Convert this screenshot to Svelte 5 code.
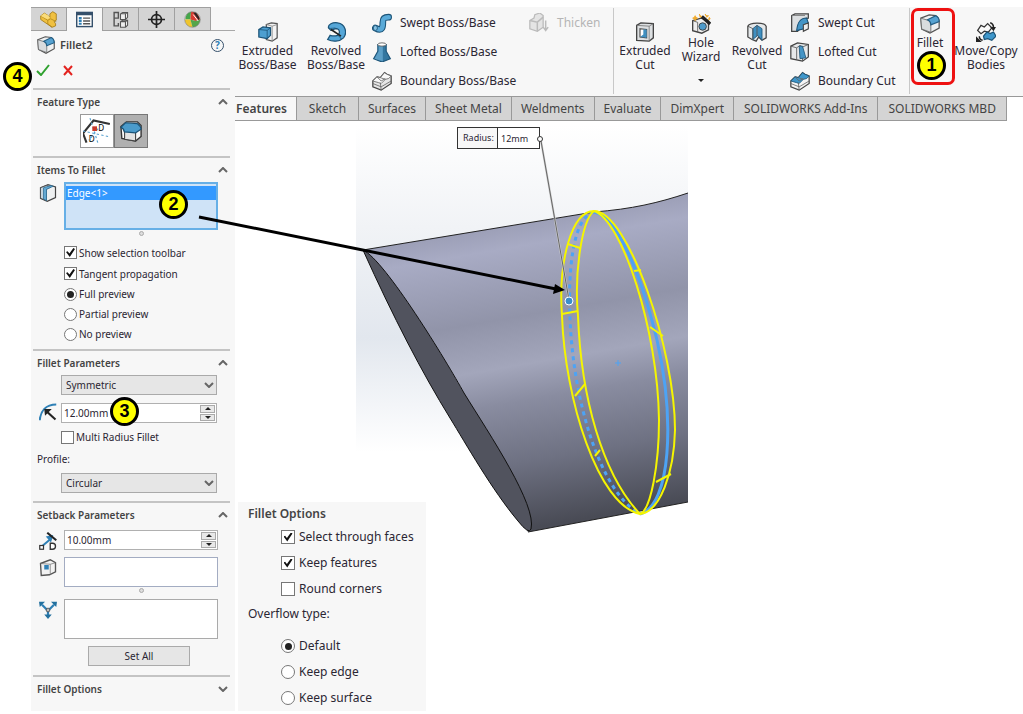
<script lang="ts">
    type Choice = { label: string; on: boolean };

    const managerTabs = ["part", "list", "config", "target", "ball"];
    const managerNames = ["Design tree", "Properties", "Configurations", "DimXpert manager", "Display"];

    const commandTabs = [
        "Features",
        "Sketch",
        "Surfaces",
        "Sheet Metal",
        "Weldments",
        "Evaluate",
        "DimXpert",
        "SOLIDWORKS Add-Ins",
        "SOLIDWORKS MBD",
    ];

    const bossTools = [
        { icon: "sweep", label: "Swept Boss/Base" },
        { icon: "loft", label: "Lofted Boss/Base" },
        { icon: "boundary", label: "Boundary Boss/Base" },
    ];

    const cutTools = [
        { icon: "sweepcut", label: "Swept Cut" },
        { icon: "loftcut", label: "Lofted Cut" },
        { icon: "boundarycut", label: "Boundary Cut" },
    ];

    const itemChecks: Choice[] = $state([
        { label: "Show selection toolbar", on: true },
        { label: "Tangent propagation", on: true },
    ]);
    const optionChecks: Choice[] = $state([
        { label: "Select through faces", on: true },
        { label: "Keep features", on: true },
        { label: "Round corners", on: false },
    ]);
    const previews = ["Full preview", "Partial preview", "No preview"];
    const overflows = ["Default", "Keep edge", "Keep surface"];

    let manager = $state("list");
    let command = $state("Features");
    let preview = $state("Full preview");
    let overflow = $state("Default");
    let multiRadius = $state(false);
    let radius = $state(12);
    let setback = $state(10);
</script>

{#snippet icon(name: string)}
    <svg class="icon" viewBox="0 0 24 24" aria-hidden="true">
        {#if name === "part"}
            <path d="M1 7l5-4 5 3 3 3V4l4-3 5 3v9l-3 2 2 3v3l-5 2L1 12z" fill="#f0c040" stroke="#a57c17" stroke-width="1.2" />
            <path d="M1 7l10 6v5l6 5M11 13l4-2 8 4" fill="none" stroke="#a57c17" />
            <path d="M1 7l5-4 5 3 3 3-3 3z" fill="#f9dc7c" />
        {:else if name === "list"}
            <rect x="1" y="2" width="22" height="20" fill="#fff" stroke="#35506b" stroke-width="2" />
            <path d="M1 4h22" stroke="#35506b" stroke-width="4" />
            <path d="M4 10h4M4 14h4M4 18h4" stroke="#2f7fb5" stroke-width="3" />
            <path d="M10 10h10M10 14h10M10 18h10" stroke="#555" stroke-width="2" />
        {:else if name === "config"}
            <path d="M3 1v20h7M3 2h6v8H3M9 17v4" fill="none" stroke="#555" stroke-width="2" />
            <path d="M12 4l3-2h7v7l-3 3h-7zM12 4h7v8M19 4l3-2M12 15l3-2h7v7l-3 3h-7zM12 15h7v8M19 15l3-2" fill="#eee" stroke="#555" stroke-width="1.5" />
        {:else if name === "target"}
            <circle cx="12" cy="12" r="7" fill="none" stroke="#222" stroke-width="2.4" />
            <path d="M12 0v24M0 12h24" stroke="#222" stroke-width="2.4" />
        {:else if name === "ball"}
            <circle cx="12" cy="12" r="11" fill="#eee" />
            <path d="M2 12A11 11 0 0 1 10 1L9 12z" fill="#45a64a" />
            <path d="M9 12L10 1Q20 0 23 12l-7 2z" fill="#d93b32" />
            <path d="M1 12l8 0 3 11A11 11 0 0 1 1 12z" fill="#efc52d" />
            <path d="M9 12l7 2 7-2a11 11 0 0 1-11 11z" fill="#55a64a" />
            <path d="M13 2l4 0 5 8-1 3z" fill="#262626" />
            <path d="M13 5l7 9" stroke="#fff" stroke-width="1.4" />
            <circle cx="12" cy="12" r="11" fill="none" stroke="#777" stroke-width="0.8" />
        {:else if name === "fillet"}
            <path d="M1 5L11 1l8 1q4 3 4 6v9l-11 6L2 18z" fill="#eef0f1" stroke="#555" stroke-width="1.5" />
            <path d="M1 5l10 3q2 2 2 5v9L2 18z" fill="#d9dcde" stroke="#666" />
            <path d="M9 7L19 2q4 2 4 7l-10 4q0-4-4-6z" fill="#56a2d1" stroke="#235e84" stroke-width="1.4" />
        {:else if name === "filletface"}
            <path d="M1 7l6-5h12l4 4v12l-6 5L2 20z" fill="#fafafa" stroke="#333" stroke-width="1.5" />
            <path d="M2 8q2 1 3 6v7l12 2v-9" fill="#e3e3e3" stroke="#444" stroke-width="1.2" />
            <path d="M1 8l5-5 13 1q4 3 4 6l-6 4-12-1Q4 9 1 8z" fill="#4b9bcb" stroke="#1c5478" stroke-width="1.3" />
        {:else if name === "chamfer"}
            <path d="M3 22L0 14 9 3l14 3" fill="none" stroke="#333" stroke-width="1.8" />
            <path d="M6 1l7 22M0 12l23 5M13 10l-8 10" stroke="#5aa3d0" stroke-dasharray="2 2" />
            <rect x="8" y="8" width="4" height="4" fill="#c93a2b" />
            <text x="13" y="12" font-size="7" font-family="Noto Sans">D</text>
            <text x="5" y="21" font-size="7" font-family="Noto Sans">D</text>
        {:else if name === "edge"}
            <path d="M2 5l10-4 10 3v14l-11 5-9-4z" fill="#eef0f1" stroke="#444" stroke-width="1.6" />
            <path d="M2 5l8-3 6 2-6 3v15l-8-3z" fill="#c5d5df" stroke="#444" />
            <path d="M6 5l10-3 3 1-9 4v15l-4-2z" fill="#63a8d2" stroke="#2c6c95" />
        {:else if name === "radius"}
            <path d="M1 23C2 11 9 2 23 2" fill="none" stroke="#2f80b6" stroke-width="2.8" />
            <path d="M22 22L11 12" stroke="#222" stroke-width="2.8" />
            <path d="M7 8h10l-9 9z" fill="#222" />
        {:else if name === "setback"}
            <path d="M4 19L17 8" stroke="#2f80b6" stroke-width="2.6" />
            <path d="M9 6l10-2-3 10z" fill="#2f80b6" />
            <path d="M11 1l12 10" stroke="#222" stroke-width="2.8" />
            <rect x="1" y="18" width="5" height="5" fill="#fff" stroke="#333" stroke-width="1.6" />
            <path d="M15 15h3q4 0 4 4t-4 4h-3z" fill="#fff" stroke="#333" stroke-width="1.8" />
        {:else if name === "vertex"}
            <path d="M2 6l13-5 7 4v12l-8 4-11 1z" fill="#f2f2f2" stroke="#555" stroke-width="1.8" />
            <path d="M2 6l13 1 7-2M15 7v14" fill="none" stroke="#777" />
            <rect x="7" y="8" width="6" height="6" fill="#2f80b6" />
        {:else if name === "branch"}
            <path d="M12 13L4 5M12 13l8-8M12 13v7" stroke="#2f80b6" stroke-width="3" />
            <path d="M0 1h8L1 8zM24 1h-8l7 7zM7 18h10l-5 6z" fill="#23719f" />
            <circle cx="12" cy="12" r="2.5" fill="#bbb" stroke="#444" />
        {:else if name === "extrude"}
            <path d="M10 3l6-2 7 1v17l-6 4-7-2z" fill="#f3f3f3" stroke="#555" stroke-width="1.5" />
            <path d="M17 5v17M10 3l7 2 6-2" fill="none" stroke="#888" />
            <path d="M1 9l5-3 9 1v9l-4 4-10-2z" fill="#4d9fd0" stroke="#1c5478" stroke-width="1.5" />
            <path d="M1 9l10 1 4-3M11 10v10" fill="none" stroke="#1c5478" />
        {:else if name === "revolve"}
            <path d="M3 7C2 3 8 0 14 1c9 1 12 12 7 18-5 5-13 5-19 2l3-5c3 1 6 1 9 0 3-2 3-7-1-8-4 0-5 2-7 2z" fill="#56a7d8" stroke="#1c5478" stroke-width="1.5" />
            <path d="M3 7c2 2 7-1 10 1M14 16c2 1 4 3 4 5" fill="none" stroke="#1c5478" />
            <path d="M6 9l12 8" stroke="#222" stroke-width="2" />
        {:else if name === "sweep"}
            <path d="M4 18c9 5 9-2 9-7 0-5 2-6 7-6" fill="none" stroke="#1c5478" stroke-width="8" stroke-linecap="round" />
            <path d="M4 18c9 5 9-2 9-7 0-5 2-6 7-6" fill="none" stroke="#5aaad8" stroke-width="5.5" stroke-linecap="round" />
            <ellipse cx="4" cy="18" rx="2.5" ry="3" fill="#87c1e2" stroke="#1c5478" />
        {:else if name === "loft"}
            <path d="M7 3v8L2 20l10 4 10-4-5-9V3z" fill="#3477a0" stroke="#1c5478" stroke-width="1.4" />
            <path d="M13 4v19l-10-3 5-9V3z" fill="#5c9fc7" />
            <ellipse cx="12" cy="3" rx="5" ry="2" fill="#fff" stroke="#555" />
        {:else if name === "boundary" || name === "boundarycut"}
            <path d="M1 12l5-5 4 1 5-6 3 2 5 2v9L11 23 1 19z" fill={name === "boundary" ? "#e6e6e6" : "#f4f4f4"} stroke="#444" stroke-width="1.5" />
            <path d="M1 12l5-5 4 1 5-6 3 2 5 2-3 3-4 1-5 5-3-1z" fill={name === "boundary" ? "#f8f8f8" : "#3f97cb"} stroke={name === "boundary" ? "#666" : "#1c5478"} />
            <path d="M6 7l5 5 5-3M10 14l1 9M10 8l6 2M1 15l10 4 12-7" fill="none" stroke="#666" />
        {:else if name === "thicken"}
            <path d="M1 9l5-3 1-4 6-2 4 3v14l-7 5-9-3z" fill="#e4e4e4" stroke="#bbb" stroke-width="1.5" />
            <path d="M1 9l9 2 7-6M10 11v11M20 9v11M17 17l3 4 3-4" fill="none" stroke="#bbb" stroke-width="1.8" />
        {:else if name === "extrudecut"}
            <path d="M2 4l5-3 15 1v17l-5 4-15-1z" fill="#dde0e2" stroke="#444" stroke-width="1.6" />
            <path d="M2 4l15 1v17M17 5l5-3" fill="none" stroke="#777" />
            <path d="M6 8l8 1v10l-8-1z" fill="#fff" stroke="#444" stroke-width="1.3" />
            <path d="M10 9l4 0v10l-8-1 4-3z" fill="#3f8fc0" />
        {:else if name === "wizard"}
            <path d="M2 8l10-3 9 3v11l-8 4-11-3z" fill="#eee" stroke="#444" stroke-width="1.6" />
            <path d="M2 8l6 2v12" fill="none" stroke="#555" />
            <circle cx="14" cy="15" r="4.5" fill="#4e9bcb" stroke="#333" />
            <path d="M13 3l10 9" stroke="#222" stroke-width="4" />
            <path d="M5 2l1 2 2 1-2 1-1 2-1-2-2-1 2-1zM10 0l1 2 2 1-2 1zM17 0l1 2 3 0-2 2zM22 4l1 2-2 1z" fill="#f0aa2b" stroke="#f0aa2b" />
        {:else if name === "revolvecut"}
            <path d="M1 5c2-5 20-5 22 0v14l-5 3-4-4-3 5-5-2-5-3z" fill="#e4e7e9" stroke="#444" stroke-width="1.5" />
            <path d="M7 8l5-4 6 4v14l-5-6-6 5z" fill="#3f8fc0" stroke="#1c5478" />
            <path d="M12 4v13M1 5l6 3v13" fill="none" stroke="#555" />
        {:else if name === "sweepcut"}
            <path d="M2 3l4-2h16v5c-6 0-8 5-8 11l-5 5H2z" fill="#dcdfe1" stroke="#444" stroke-width="1.5" />
            <path d="M20 6c-8 0-11 5-12 15l9-2c0-5 1-6 5-7z" fill="#4595c6" stroke="#1c5478" stroke-width="1.3" />
            <path d="M2 3h16" stroke="#777" />
            <path d="M16 14l6-2v7l-6 3z" fill="#eee" stroke="#444" stroke-width="1.3" />
        {:else if name === "loftcut"}
            <path d="M1 5l8-4 13 2v15l-7 5-14-3z" fill="#e7e9ea" stroke="#444" stroke-width="1.5" />
            <path d="M1 5l7 2v14M15 6v17M15 6l7-3M8 7l4-3 3 2" fill="none" stroke="#555" />
            <path d="M11 5h4l4 14-7 1z" fill="#4595c6" stroke="#1c5478" />
        {:else if name === "movecopy"}
            <path d="M2 10l4-6 4 2 4-4 5 5-4 5-5-1-4 3z" fill="#fafafa" stroke="#333" stroke-width="1.5" />
            <path d="M9 17l4-5 4 2 4-2 3 5-5 5-5-2-4 1z" fill="#3f97cb" stroke="#1c5478" stroke-width="1.5" />
            <path d="M17 1q4 1 4 6M8 22q-4-1-4-5" fill="none" stroke="#222" stroke-width="1.8" />
            <path d="M17 6h7l-3 5zM0 24v-7l7 7z" fill="#222" />
        {/if}
    </svg>
{/snippet}

{#snippet head(title: string, open: boolean)}
    <button class="section-head" aria-expanded={open}>
        <span>{title}</span>
        <svg viewBox="0 0 10 6" class:down={!open} aria-hidden="true"><path d="M1 5l4-4 4 4" /></svg>
    </button>
{/snippet}

{#snippet bigTool(name: string, first: string, second: string, size: string)}
    <button class="big-tool {size}">
        {@render icon(name)}
        <span>{first}<br />{second}</span>
    </button>
{/snippet}

{#snippet drop(label: string, value: string)}
    <span class="drop">
        <select aria-label={label}><option>{value}</option></select>
        <svg viewBox="0 0 10 6" aria-hidden="true"><path d="M1 1l4 4 4-4" /></svg>
    </span>
{/snippet}

<div class="page">
    <aside class="manager">
        <nav class="manager-tabs">
            {#each managerTabs as tab, i (tab)}
                <button class:active={manager === tab} aria-label={managerNames[i]} onclick={() => (manager = tab)}>
                    {@render icon(tab)}
                </button>
            {/each}
        </nav>

        <div class="title">
            {@render icon("fillet")}
            <h1>Fillet2</h1>
            <button class="help" aria-label="Help">?</button>
        </div>
        <div class="confirm">
            <button aria-label="OK">
                <svg viewBox="0 0 14 12"><path d="M1 7l4 4 8-10" stroke="#2fa12f" /></svg>
            </button>
            <button aria-label="Cancel">
                <svg viewBox="0 0 14 12"><path d="M2 2l8 9M10 2l-8 9" stroke="#e3231f" /></svg>
            </button>
            <b class="callout four">4</b>
        </div>

        <section>
            {@render head("Feature Type", true)}
            <div class="types">
                <button aria-label="Chamfer">{@render icon("chamfer")}</button>
                <button class="active" aria-label="Fillet">{@render icon("filletface")}</button>
            </div>
        </section>

        <section class="items">
            {@render head("Items To Fillet", true)}
            <div class="field">
                {@render icon("edge")}
                <ul class="picked">
                    <li>Edge&lt;1&gt;</li>
                </ul>
                <b class="callout two">2</b>
            </div>
            <i class="grip"></i>
            <div class="choices">
                {#each itemChecks as item (item.label)}
                    <label class="check"><input type="checkbox" bind:checked={item.on} />{item.label}</label>
                {/each}
                {#each previews as item (item)}
                    <label><input type="radio" name="preview" value={item} bind:group={preview} />{item}</label>
                {/each}
            </div>
        </section>

        <section class="params">
            {@render head("Fillet Parameters", true)}
            <div class="field">
                <span></span>
                {@render drop("Radius method", "Symmetric")}
            </div>
            <div class="field">
                {@render icon("radius")}
                <span class="spin">
                    <input aria-label="Radius" value="{radius.toFixed(2)}mm" />
                    <span>
                        <button aria-label="Increase radius" onclick={() => radius++}></button>
                        <button class="less" aria-label="Decrease radius" onclick={() => radius--}></button>
                    </span>
                </span>
                <b class="callout three">3</b>
            </div>
            <div class="field">
                <span></span>
                <label class="multi"><input type="checkbox" bind:checked={multiRadius} />Multi Radius Fillet</label>
            </div>
            <p>Profile:</p>
            <div class="field">
                <span></span>
                {@render drop("Profile", "Circular")}
            </div>
        </section>

        <section class="setback">
            {@render head("Setback Parameters", true)}
            <div class="field">
                {@render icon("setback")}
                <span class="spin">
                    <input aria-label="Setback distance" value="{setback.toFixed(2)}mm" />
                    <span>
                        <button aria-label="Increase distance" onclick={() => setback++}></button>
                        <button class="less" aria-label="Decrease distance" onclick={() => setback--}></button>
                    </span>
                </span>
            </div>
            <div class="field">
                {@render icon("vertex")}
                <textarea class="vertices" aria-label="Setback vertices"></textarea>
            </div>
            <i class="grip"></i>
            <div class="field">
                {@render icon("branch")}
                <textarea aria-label="Setback distances"></textarea>
            </div>
            <button class="set-all">Set All</button>
        </section>

        <section>
            {@render head("Fillet Options", false)}
        </section>
    </aside>

    <main>
        <header class="ribbon">
            {@render bigTool("extrude", "Extruded", "Boss/Base", "first")}
            {@render bigTool("revolve", "Revolved", "Boss/Base", "second")}
            <div class="stack boss">
                {#each bossTools as tool (tool.icon)}
                    <button>{@render icon(tool.icon)}{tool.label}</button>
                {/each}
            </div>
            <div class="stack thicken">
                <button disabled>{@render icon("thicken")}Thicken</button>
            </div>
            <hr />
            {@render bigTool("extrudecut", "Extruded", "Cut", "cut")}
            <button class="big-tool high hole">
                {@render icon("wizard")}
                <span>Hole<br />Wizard</span>
                <i class="more"></i>
            </button>
            {@render bigTool("revolvecut", "Revolved", "Cut", "cut")}
            <div class="stack cuts">
                {#each cutTools as tool (tool.icon)}
                    <button>{@render icon(tool.icon)}{tool.label}</button>
                {/each}
            </div>
            <hr />
            <div class="fillet-tool">
                <button class="big-tool high">
                    {@render icon("fillet")}
                    <span>Fillet</span>
                </button>
                <i class="outline"></i>
                <b class="callout one">1</b>
            </div>
            {@render bigTool("movecopy", "Move/Copy", "Bodies", "move")}
        </header>

        <nav class="commands">
            {#each commandTabs as tab (tab)}
                <button class:active={command === tab} onclick={() => (command = tab)}>{tab}</button>
            {/each}
        </nav>

        <div class="workspace">
            <div class="view">
                <svg class="model" viewBox="356 122 332 412" aria-label="Fillet preview">
                    <defs>
                        <linearGradient id="sky" x1="0" y1="0" x2="0" y2="1">
                            <stop offset="0" stop-color="#fff" />
                            <stop offset="0.25" stop-color="#f1f3f6" />
                            <stop offset="0.52" stop-color="#e2e7ee" />
                            <stop offset="0.8" stop-color="#fff" />
                        </linearGradient>
                        <linearGradient id="body" gradientUnits="userSpaceOnUse" x1="600" y1="211" x2="651" y2="507">
                            <stop offset="0" stop-color="#9da0b8" />
                            <stop offset="0.07" stop-color="#a8abc4" />
                            <stop offset="0.3" stop-color="#9194a9" />
                            <stop offset="0.46" stop-color="#a3a6bb" />
                            <stop offset="0.58" stop-color="#898ca0" />
                            <stop offset="0.78" stop-color="#6e7182" />
                            <stop offset="1" stop-color="#494b55" />
                        </linearGradient>
                    </defs>
                    <path d="M356 125h332v409H356z" fill="url(#sky)" />
                    <path d="M363 250L594 212C632 209 658 203 688 193V502L528 532z" fill="url(#body)" />
                    <path d="M363 250L594 212C632 209 658 203 688 193M688 502L528 532" fill="none" stroke="#222" />
                    <path
                        d="M363 250C385 260 447 362 464 393C490 435 537 505 531 529Q529 535 518 521C492 490 466 444 450 418Q408 350 363 250z"
                        fill="#51535e"
                        stroke="#111"
                    />
                    <g fill="none" stroke="#4da3f5" stroke-width="3">
                        <path d="M594 212C572 217 568 275 570 318C573 400 600 492 640 514" stroke-dasharray="4 4" />
                        <path d="M594 212C616 216 640 270 657 340C675 420 671 505 640 514" />
                    </g>
                    <g fill="none" stroke="#f5f500" stroke-width="2">
                        <path d="M594 211C572 211 558 260 562 316C565 400 598 505 640 514C660 512 674 473 675 430C675 350 628 211 594 211z" />
                        <path d="M594 211C582 220 574 272 578 316C581 396 602 474 640 514C651 510 659 464 659 420C658 330 622 220 594 211z" />
                        <path d="M568 244l12 4M562 314l16-3M575 396l10-12M595 456l5-6M634 271l7-1M650 327l13 9M656 482l15-8" />
                    </g>
                    <path d="M618 360v6M615 363h6" stroke="#4da3f5" />
                    <path d="M541 141L569 300" stroke="#ccc" stroke-width="2" />
                    <path d="M541 141L569 300" stroke="#666" />
                    <circle cx="569" cy="301" r="4" fill="#3b8ecb" stroke="#fff" />
                </svg>
                <label class="dimension">
                    <span>Radius:</span>
                    <input value="12mm" />
                </label>
                <i class="handle"></i>
            </div>

            <fieldset class="options">
                <legend>Fillet Options</legend>
                {#each optionChecks as item (item.label)}
                    <label><input type="checkbox" bind:checked={item.on} />{item.label}</label>
                {/each}
                <p>Overflow type:</p>
                {#each overflows as item (item)}
                    <label><input type="radio" name="overflow" value={item} bind:group={overflow} />{item}</label>
                {/each}
            </fieldset>
        </div>
    </main>

    <svg class="pointer" viewBox="198 214 368 80" aria-hidden="true">
        <path d="M199 217L556 289" stroke="#000" stroke-width="3" />
        <path d="M565 290l-12 4 2-10z" />
    </svg>
</div>

<style>
    :global(body) {
        margin: 0;
        background: #fff;
    }

    .page {
        position: relative;
        display: flex;
        padding: 7px 0 3px 31px;
        font-family: "Noto Sans", "Open Sans", sans-serif;
        font-size: 10px;
        line-height: 14px;
        color: #2b2633;
    }

    .page * {
        box-sizing: border-box;
    }

    button,
    input,
    select,
    textarea {
        font: inherit;
        color: inherit;
        margin: 0;
        padding: 0;
    }

    button {
        border: none;
        background: none;
    }

    .icon {
        display: block;
        width: 20px;
        height: 20px;
        flex: none;
    }

    /* property manager */
    .manager {
        flex: 0 0 204px;
        background: #f7f7f7;
        padding-bottom: 2px;
    }

    .manager-tabs {
        display: flex;
        height: 24px;
        border-bottom: 1px solid #a8a8a8;
    }

    .manager-tabs button {
        display: grid;
        place-items: center;
        width: 36px;
        height: 24px;
        background: #d4d4d4;
        border: 1px solid #a0a0a0;
        border-left: none;
    }

    .manager-tabs button.active {
        background: #f7f7f7;
        border-bottom: none;
    }

    .manager-tabs .icon {
        width: 17px;
        height: 17px;
    }

    .title {
        display: flex;
        align-items: center;
        height: 28px;
        padding: 0 11px 0 6px;
        gap: 5px;
    }

    .title .icon {
        width: 18px;
        height: 18px;
    }

    .title h1 {
        flex: 1;
        margin: 0;
        font-size: 11px;
        font-weight: 600;
        color: #444;
    }

    .help {
        width: 13px;
        height: 13px;
        border: 1px solid #35506b;
        border-radius: 50%;
        font-size: 10px;
        font-weight: 700;
        line-height: 11px;
        color: #2f7fb5;
    }

    .confirm {
        position: relative;
        display: flex;
        gap: 12px;
        height: 29px;
        padding: 5px 5px 0;
    }

    .confirm button {
        width: 14px;
        height: 12px;
    }

    .confirm svg {
        display: block;
        fill: none;
        stroke-width: 2;
    }

    section {
        margin: 0 5px 0 2px;
        padding: 0 0 8px 4px;
        border-top: 2px solid #c4c4c4;
    }

    .section-head {
        display: flex;
        align-items: center;
        justify-content: space-between;
        width: 100%;
        height: 24px;
        padding-right: 2px;
        font-weight: 600;
        color: #444;
    }

    .section-head svg,
    .drop svg {
        width: 10px;
        height: 6px;
        fill: none;
        stroke: #666;
        stroke-width: 2;
    }

    .section-head .down {
        transform: scaleY(-1);
    }

    .types {
        display: flex;
        padding-left: 43px;
    }

    .types button {
        display: grid;
        place-items: center;
        width: 34px;
        height: 34px;
        border: 1px solid #999;
        background: #fff;
    }

    .types button.active {
        background: #b0b0b0;
        border-color: #777;
    }

    .types .icon {
        width: 28px;
        height: 28px;
    }

    .types .active .icon {
        width: 22px;
        height: 22px;
    }

    .field {
        position: relative;
        display: grid;
        grid-template-columns: 27px 154px;
    }

    .field .icon {
        width: 18px;
        height: 18px;
        margin-left: 2px;
    }

    .items {
        padding-bottom: 5px;
    }

    .items .icon,
    .setback .icon {
        margin-top: 2px;
    }

    .picked {
        height: 48px;
        margin: 0;
        padding: 2px 0;
        list-style: none;
        border: 2px solid #66afe6;
        background: #cfe3f7;
    }

    .picked li {
        height: 14px;
        padding-left: 1px;
        color: #fff;
        background: #3399ff;
    }

    .grip {
        display: block;
        width: 5px;
        height: 5px;
        margin: 1px 0 6px 102px;
        border: 1px solid #aaa;
        border-radius: 50%;
        background: #ddd;
    }

    label {
        display: flex;
        align-items: center;
        gap: 2px;
        height: 20px;
    }

    .choices {
        padding-left: 27px;
    }

    .check {
        height: 21px;
    }

    input[type="checkbox"],
    input[type="radio"] {
        appearance: none;
        display: grid;
        place-items: center;
        flex: none;
        width: 13px;
        height: 13px;
        background: #fff;
        border: 1px solid #777;
    }

    input[type="radio"] {
        border-radius: 50%;
    }

    input[type="checkbox"]:checked::before {
        content: "";
        width: 9px;
        height: 9px;
        background: #111;
        clip-path: polygon(0 45%, 18% 35%, 38% 62%, 82% 0, 100% 12%, 42% 100%);
    }

    input[type="radio"]:checked::before {
        content: "";
        width: 7px;
        height: 7px;
        border-radius: 50%;
        background: #222;
    }

    .params .field {
        grid-template-columns: 24px 156px;
        margin-bottom: 8px;
    }

    .params .field:has(.spin),
    .params .field:has(.multi) {
        margin-bottom: 4px;
    }

    .params .field:last-child {
        margin-bottom: 0;
    }

    .params p {
        margin: 0;
        height: 22px;
        line-height: 16px;
    }

    .drop {
        position: relative;
        display: block;
        height: 20px;
    }

    .drop select {
        appearance: none;
        width: 100%;
        height: 20px;
        padding: 0 4px;
        border: 1px solid #aaa;
        border-radius: 0;
        background: #e6e6e6;
    }

    .drop svg {
        position: absolute;
        right: 3px;
        top: 7px;
    }

    .spin {
        display: flex;
        height: 20px;
        border: 1px solid #b0b0b0;
        background: #fff;
    }

    .spin input {
        flex: 1;
        min-width: 0;
        padding: 0 2px;
        border: none;
        background: none;
    }

    .spin > span {
        display: grid;
        gap: 1px;
        width: 16px;
        padding: 1px 1px 1px 0;
    }

    .spin button {
        display: grid;
        place-items: center;
        background: #e8e8e8;
        border: 1px solid #aaa;
    }

    .spin button::before,
    .more {
        content: "";
        border: 3px solid transparent;
        border-top: none;
        border-bottom: 3px solid #222;
    }

    .spin .less::before,
    .more {
        transform: rotate(180deg);
    }

    .setback {
        padding-bottom: 9px;
    }

    .setback .section-head {
        margin-bottom: 3px;
    }

    .setback .field:has(.spin) {
        margin-bottom: 7px;
    }

    textarea {
        display: block;
        height: 40px;
        resize: none;
        border: 1px solid #aaa;
        background: #fff;
    }

    .vertices {
        height: 30px;
        border-color: #a3acc2;
    }

    .set-all {
        display: block;
        width: 102px;
        height: 20px;
        margin: 7px 0 0 51px;
        border: 1px solid #aaa;
        background: #e6e6e6;
    }

    /* command ribbon */
    main {
        flex: 1;
        min-width: 0;
        display: flex;
        flex-direction: column;
    }

    .ribbon {
        display: flex;
        height: 90px;
        background: #f7f7f7;
        border-bottom: 1px solid #999;
        font-size: 12px;
    }

    .ribbon hr {
        width: 1px;
        height: 86px;
        margin: 1px 0 0;
        border: none;
        background: #c8c8c8;
    }

    .big-tool {
        display: flex;
        flex-direction: column;
        align-items: center;
        flex: none;
        gap: 2px;
        padding-top: 15px;
        line-height: 14px;
        white-space: nowrap;
    }

    .high {
        padding-top: 7px;
    }

    .first {
        width: 65px;
    }

    .second {
        width: 72px;
    }

    .cut {
        width: 62px;
    }

    .hole {
        width: 50px;
    }

    .move {
        width: 72px;
    }

    .more {
        margin-top: 13px;
    }

    .stack {
        display: flex;
        flex-direction: column;
        flex: none;
        padding-top: 1px;
    }

    .boss {
        width: 157px;
    }

    .thicken {
        width: 84px;
    }

    .cuts {
        width: 121px;
        padding-left: 2px;
    }

    .stack button {
        display: flex;
        align-items: center;
        gap: 8px;
        height: 29px;
        white-space: nowrap;
    }

    .stack button:disabled {
        color: #b5b5b5;
    }

    .fillet-tool {
        position: relative;
        flex: 0 0 40px;
    }

    .fillet-tool .big-tool {
        width: 40px;
    }

    .outline {
        position: absolute;
        left: 1px;
        top: 1px;
        width: 44px;
        height: 77px;
        border: 3px solid #ee1111;
        border-radius: 7px;
    }

    .commands {
        display: flex;
        height: 24px;
        font-size: 12px;
    }

    .commands button {
        min-width: 62px;
        padding: 0 9px;
        background: #d4d4d4;
        border: solid #999;
        border-width: 0 1px 1px 0;
        color: #444;
        white-space: nowrap;
    }

    .commands button:nth-last-child(-n + 2) {
        padding: 0 10px;
    }

    .commands .active {
        padding: 0 9px 0 1px;
        background: #f7f7f7;
        font-weight: 600;
    }

    /* graphics area */
    .workspace {
        flex: 1;
        display: grid;
        grid-template-columns: 3px 118px 70px 1fr;
    }

    .view {
        position: relative;
        grid-area: 1 / 3 / 2 / 5;
        align-self: start;
        width: 332px;
        margin-top: 1px;
    }

    .model {
        display: block;
        width: 100%;
    }

    .dimension {
        position: absolute;
        left: 101px;
        top: 5px;
        gap: 0;
        width: 83px;
        height: 22px;
        border: 1px solid #333;
        background: #f7f7f7;
        font-size: 9px;
    }

    .dimension span {
        padding: 0 0 0 5px;
        width: 40px;
        border-right: 1px solid #333;
        line-height: 20px;
    }

    .dimension input {
        flex: 1;
        min-width: 0;
        height: 20px;
        padding: 0 3px;
        border: none;
        background: #fff;
    }

    .handle {
        position: absolute;
        left: 181px;
        top: 14px;
        width: 6px;
        height: 6px;
        border: 1px solid #333;
        border-radius: 50%;
        background: #fff;
    }

    .options {
        position: relative;
        grid-area: 1 / 2 / 2 / 4;
        align-self: end;
        height: 209px;
        margin: 0;
        padding: 0 0 0 43px;
        border: none;
        background: #f7f7f7;
        font-size: 12px;
    }

    .options legend {
        float: left;
        width: 100%;
        height: 22px;
        margin-left: -33px;
        padding: 0;
        line-height: 24px;
        font-weight: 600;
        color: #444;
    }

    .options label {
        clear: both;
        gap: 4px;
        height: 26px;
    }

    .options label input {
        width: 14px;
        height: 14px;
    }

    .options p {
        height: 31px;
        margin: 0 0 0 -33px;
        line-height: 24px;
    }

    /* numbered steps */
    .callout {
        position: absolute;
        width: 29px;
        height: 29px;
        border: 3px solid #000;
        border-radius: 50%;
        background: #ff0;
        font: bold 18px/23px "Liberation Sans", Arial, sans-serif;
        text-align: center;
        color: #000;
    }

    .one {
        left: 7px;
        top: 44px;
    }

    .two {
        left: 122px;
        top: 8px;
    }

    .three {
        left: 73px;
        top: -6px;
    }

    .four {
        left: -28px;
        top: 3px;
    }

    .pointer {
        position: absolute;
        left: 198px;
        top: 214px;
        width: 368px;
        height: 80px;
    }
</style>
